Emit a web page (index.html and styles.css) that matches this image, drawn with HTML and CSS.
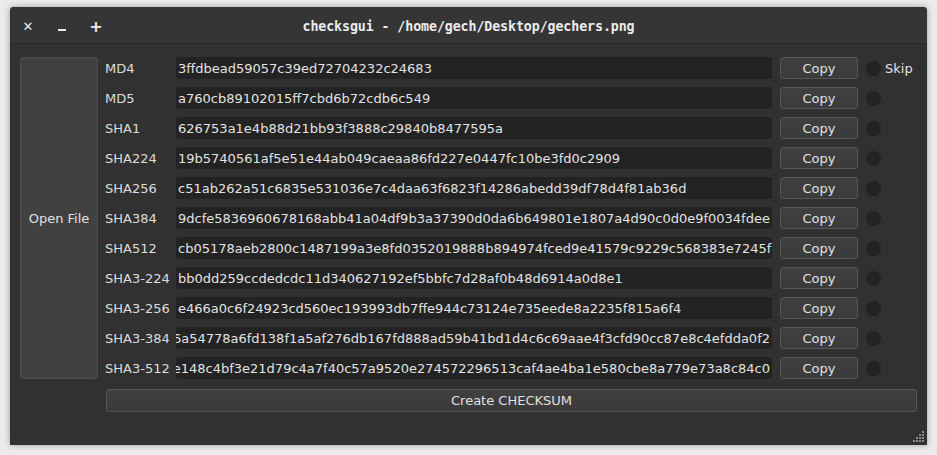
FILE: index.html
```html
<!DOCTYPE html>
<html>
<head>
<meta charset="utf-8">
<link rel="stylesheet" href="styles.css">
</head>
<body>
<div class="window">
  <div class="titlebar">
    <div class="wbtns">
      <span class="wb wb-close">✕</span>
      <span class="wb"><span class="minbar"></span></span>
      <span class="wb">+</span>
    </div>
    <div class="title">checksgui - /home/gech/Desktop/gechers.png</div>
  </div>
  <div class="content">
    <div class="openbtn">Open File</div>
    <div class="main">
      <div class="row"><div class="label">MD4</div><div class="field">3ffdbead59057c39ed72704232c24683</div><div class="btn copy">Copy</div><div class="dot"></div><div class="skip">Skip</div></div>
      <div class="row"><div class="label">MD5</div><div class="field">a760cb89102015ff7cbd6b72cdb6c549</div><div class="btn copy">Copy</div><div class="dot"></div></div>
      <div class="row"><div class="label">SHA1</div><div class="field">626753a1e4b88d21bb93f3888c29840b8477595a</div><div class="btn copy">Copy</div><div class="dot"></div></div>
      <div class="row"><div class="label">SHA224</div><div class="field">19b5740561af5e51e44ab049caeaa86fd227e0447fc10be3fd0c2909</div><div class="btn copy">Copy</div><div class="dot"></div></div>
      <div class="row"><div class="label">SHA256</div><div class="field">c51ab262a51c6835e531036e7c4daa63f6823f14286abedd39df78d4f81ab36d</div><div class="btn copy">Copy</div><div class="dot"></div></div>
      <div class="row"><div class="label">SHA384</div><div class="field">9dcfe5836960678168abb41a04df9b3a37390d0da6b649801e1807a4d90c0d0e9f0034fdee</div><div class="btn copy">Copy</div><div class="dot"></div></div>
      <div class="row"><div class="label">SHA512</div><div class="field">cb05178aeb2800c1487199a3e8fd0352019888b894974fced9e41579c9229c568383e7245f</div><div class="btn copy">Copy</div><div class="dot"></div></div>
      <div class="row"><div class="label">SHA3-224</div><div class="field">bb0dd259ccdedcdc11d340627192ef5bbfc7d28af0b48d6914a0d8e1</div><div class="btn copy">Copy</div><div class="dot"></div></div>
      <div class="row"><div class="label">SHA3-256</div><div class="field">e466a0c6f24923cd560ec193993db7ffe944c73124e735eede8a2235f815a6f4</div><div class="btn copy">Copy</div><div class="dot"></div></div>
      <div class="row"><div class="label">SHA3-384</div><div class="field end"><span>6a54778a6fd138f1a5af276db167fd888ad59b41bd1d4c6c69aae4f3cfd90cc87e8c4efdda0f2</span></div><div class="btn copy">Copy</div><div class="dot"></div></div>
      <div class="row"><div class="label">SHA3-512</div><div class="field end"><span>3e148c4bf3e21d79c4a7f40c57a9520e274572296513caf4ae4ba1e580cbe8a779e73a8c84c0</span></div><div class="btn copy">Copy</div><div class="dot"></div></div>
      <div class="btn create">Create CHECKSUM</div>
    </div>
  </div>
  <div class="grip">
    <svg width="12" height="12" viewBox="0 0 12 12">
      <g fill="#8a8a8a">
        <rect x="9" y="0" width="2" height="2"/>
        <rect x="6" y="3" width="2" height="2"/><rect x="9" y="3" width="2" height="2"/>
        <rect x="3" y="6" width="2" height="2"/><rect x="6" y="6" width="2" height="2"/><rect x="9" y="6" width="2" height="2"/>
        <rect x="0" y="9" width="2" height="2"/><rect x="3" y="9" width="2" height="2"/><rect x="6" y="9" width="2" height="2"/><rect x="9" y="9" width="2" height="2"/>
      </g>
    </svg>
  </div>
</div>
</body>
</html>
```
FILE: styles.css
```css
html, body {
  margin: 0;
  padding: 0;
}
body {
  background: #ebebeb;
  width: 937px;
  height: 455px;
  overflow: hidden;
  font-family: "DejaVu Sans", sans-serif;
  font-size: 13px;
  color: #dcdcdc;
}
.window {
  position: relative;
  margin: 7px 0 0 10px;
  width: 917px;
  height: 438px;
  background: #313131;
  border-radius: 4px 4px 0 0;
  box-shadow: 0 0 6px rgba(0, 0, 0, 0.35);
  display: flex;
  flex-direction: column;
}
.titlebar {
  position: relative;
  box-sizing: border-box;
  height: 37px;
  padding-top: 2px;
  background: #353535;
  border-bottom: 1px solid #262626;
  border-radius: 4px 4px 0 0;
  display: flex;
  align-items: center;
  justify-content: center;
}
.wbtns {
  position: absolute;
  left: 1px;
  top: 2px;
  height: 34px;
  display: flex;
  align-items: center;
}
.wb {
  width: 34px;
  height: 34px;
  color: #ececec;
  font-family: "DejaVu Sans", sans-serif;
  font-weight: bold;
  font-size: 16px;
  display: flex;
  justify-content: center;
  align-items: center;
}
.wb-close {
  font-size: 13px;
}
.minbar {
  display: block;
  width: 8px;
  height: 2px;
  background: #ececec;
  margin-top: 7px;
}
.title {
  font-family: "DejaVu Sans Mono", monospace;
  font-weight: bold;
  font-size: 13.3px;
  color: #ececec;
  letter-spacing: -0.1px;
}
.content {
  display: flex;
  padding: 13px 10px 0 10px;
  gap: 7px;
}
.openbtn {
  width: 76px;
  height: 319px;
  background: #414141;
  border: 1px solid #4f4f4f;
  border-radius: 3px;
  display: flex;
  align-items: center;
  justify-content: center;
  color: #e0e0e0;
  padding-top: 1px;
  box-sizing: content-box;
}
.main {
  display: flex;
  flex-direction: column;
  gap: 8px;
  width: 812px;
}
.row {
  display: flex;
  align-items: center;
  height: 22px;
}
.label {
  width: 71px;
  flex: none;
}
.field {
  width: 592px;
  height: 22px;
  flex: none;
  background: #232323;
  border-radius: 3px;
  padding: 0 2px;
  display: flex;
  align-items: center;
  white-space: nowrap;
  overflow: hidden;
  color: #e2e2e2;
}
.field.end {
  justify-content: flex-end;
}
.field.end span {
  flex: none;
}
.btn {
  box-sizing: border-box;
  background: linear-gradient(#404040, #3a3a3a);
  border: 1px solid #565656;
  border-radius: 3px;
  display: flex;
  align-items: center;
  justify-content: center;
  color: #e0e0e0;
}
.copy {
  width: 78px;
  height: 22px;
  margin-left: 8px;
  flex: none;
}
.dot {
  width: 15px;
  height: 15px;
  border-radius: 50%;
  background: #232323;
  margin-left: 8px;
  flex: none;
}
.skip {
  margin-left: 4px;
  color: #e0e0e0;
}
.create {
  height: 23px;
  margin-left: 1px;
  width: 811px;
  margin-top: 2px;
}
.grip {
  position: absolute;
  right: 2px;
  bottom: 2px;
  width: 12px;
  height: 12px;
}
.grip svg {
  display: block;
}
```
